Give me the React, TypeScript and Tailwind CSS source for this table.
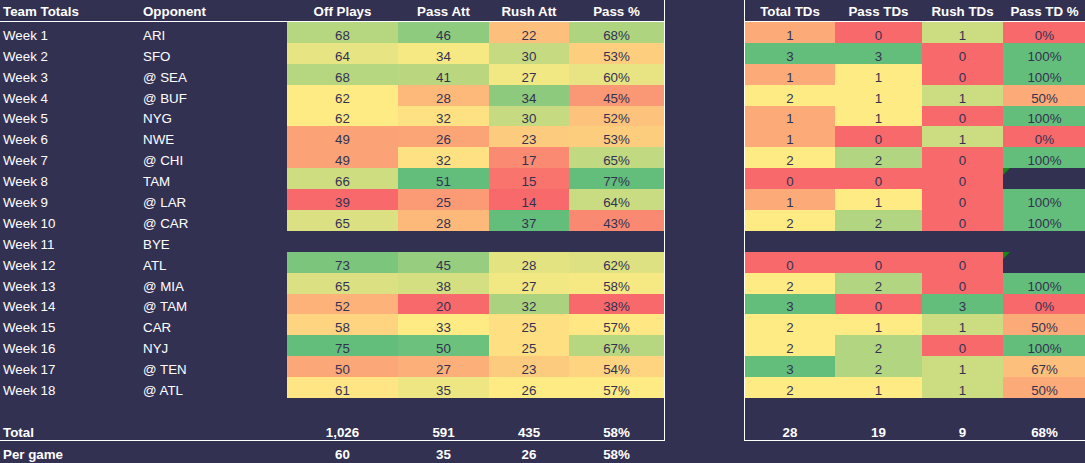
import React from "react"

type Game = {
  week: string
  opp: string
  off?: number
  pass?: number
  rush?: number
  td?: number
  ptd?: number
  rtd?: number
}

const games: Game[] = [
  { week: "Week 1", opp: "ARI", off: 68, pass: 46, rush: 22, td: 1, ptd: 0, rtd: 1 },
  { week: "Week 2", opp: "SFO", off: 64, pass: 34, rush: 30, td: 3, ptd: 3, rtd: 0 },
  { week: "Week 3", opp: "@ SEA", off: 68, pass: 41, rush: 27, td: 1, ptd: 1, rtd: 0 },
  { week: "Week 4", opp: "@ BUF", off: 62, pass: 28, rush: 34, td: 2, ptd: 1, rtd: 1 },
  { week: "Week 5", opp: "NYG", off: 62, pass: 32, rush: 30, td: 1, ptd: 1, rtd: 0 },
  { week: "Week 6", opp: "NWE", off: 49, pass: 26, rush: 23, td: 1, ptd: 0, rtd: 1 },
  { week: "Week 7", opp: "@ CHI", off: 49, pass: 32, rush: 17, td: 2, ptd: 2, rtd: 0 },
  { week: "Week 8", opp: "TAM", off: 66, pass: 51, rush: 15, td: 0, ptd: 0, rtd: 0 },
  { week: "Week 9", opp: "@ LAR", off: 39, pass: 25, rush: 14, td: 1, ptd: 1, rtd: 0 },
  { week: "Week 10", opp: "@ CAR", off: 65, pass: 28, rush: 37, td: 2, ptd: 2, rtd: 0 },
  { week: "Week 11", opp: "BYE" },
  { week: "Week 12", opp: "ATL", off: 73, pass: 45, rush: 28, td: 0, ptd: 0, rtd: 0 },
  { week: "Week 13", opp: "@ MIA", off: 65, pass: 38, rush: 27, td: 2, ptd: 2, rtd: 0 },
  { week: "Week 14", opp: "@ TAM", off: 52, pass: 20, rush: 32, td: 3, ptd: 0, rtd: 3 },
  { week: "Week 15", opp: "CAR", off: 58, pass: 33, rush: 25, td: 2, ptd: 1, rtd: 1 },
  { week: "Week 16", opp: "NYJ", off: 75, pass: 50, rush: 25, td: 2, ptd: 2, rtd: 0 },
  { week: "Week 17", opp: "@ TEN", off: 50, pass: 27, rush: 23, td: 3, ptd: 2, rtd: 1 },
  { week: "Week 18", opp: "@ ATL", off: 61, pass: 35, rush: 26, td: 2, ptd: 1, rtd: 1 },
]

// excel style red / yellow / green scale (min, 50th percentile, max)
const RED = [248, 105, 107]
const YEL = [255, 235, 132]
const GRN = [99, 190, 123]

function mix(a: number[], b: number[], t: number) {
  const c = a.map((v, i) => Math.round(v + (b[i] - v) * t))
  return `rgb(${c[0]}, ${c[1]}, ${c[2]})`
}

function colorScale(values: number[]) {
  const s = [...values].sort((a, b) => a - b)
  const min = s[0]
  const max = s[s.length - 1]
  const pos = (s.length - 1) * 0.5
  const lo = Math.floor(pos)
  const mid = s[lo] + (s[Math.ceil(pos)] - s[lo]) * (pos - lo)
  return (v: number) => {
    if (v <= min) return mix(RED, RED, 0)
    if (v >= max) return mix(GRN, GRN, 0)
    if (v <= mid) return mix(RED, YEL, (v - min) / (mid - min))
    return mix(YEL, GRN, (v - mid) / (max - mid))
  }
}

const played = games.filter((g) => g.off !== undefined)
const pct = (g: Game) => (g.pass! / g.off!) * 100
const tdPct = (g: Game) => (g.td ? (g.ptd! / g.td) * 100 : null)

const offColor = colorScale(played.map((g) => g.off!))
const passColor = colorScale(played.map((g) => g.pass!))
const rushColor = colorScale(played.map((g) => g.rush!))
const pctColor = colorScale(played.map(pct))
const tdColor = colorScale(played.map((g) => g.td!))
const ptdColor = colorScale(played.map((g) => g.ptd!))
const rtdColor = colorScale(played.map((g) => g.rtd!))
const tdPctColor = colorScale(played.map(tdPct).filter((v): v is number => v !== null))

const rowH = "h-[20.9px]"

function Num({ w, bg, children }: { w: string; bg?: string; children?: React.ReactNode }) {
  return (
    <div className={`${w} h-full flex items-end justify-center text-[#333152]`} style={bg ? { backgroundColor: bg } : undefined}>
      {children}
    </div>
  )
}

// cell holding an empty text value - excel shows its little green error flag
function Flagged() {
  return (
    <div className="relative w-[83px] h-full">
      <span className="absolute left-0 top-0 w-0 h-0 border-t-[7px] border-r-[7px] border-t-[#138a13] border-r-transparent" />
    </div>
  )
}

export default function App() {
  const sum = (k: "off" | "pass" | "rush" | "td" | "ptd" | "rtd") => played.reduce((a, g) => a + (g[k] as number), 0)
  const n = played.length
  const totOff = sum("off")
  const totPass = sum("pass")
  const totRush = sum("rush")
  const totTd = sum("td")
  const totPtd = sum("ptd")
  const totRtd = sum("rtd")

  return (
    <div className="w-[1085px] h-[463px] overflow-hidden bg-[#333152] flex items-start font-['Liberation_Sans',Arial,sans-serif] text-[13.33px] leading-[15px] text-white">
      {/* left table */}
      <div className="flex flex-col shrink-0">
        <div className="flex flex-col border-r border-b border-white">
          <div className="flex h-[22px] pb-[2px] border-b border-white font-bold items-end">
            <div className="w-[140px] pl-[3px]">Team Totals</div>
            <div className="w-[147px] pl-[3px]">Opponent</div>
            <div className="w-[111px] text-center">Off Plays</div>
            <div className="w-[91px] text-center">Pass Att</div>
            <div className="w-[80px] text-center">Rush Att</div>
            <div className="w-[95px] text-center">Pass %</div>
          </div>
          {games.map((g) => (
            <div key={g.week} className={`flex ${rowH}`}>
              <div className="w-[140px] pl-[3px] flex items-end">{g.week}</div>
              <div className="w-[147px] pl-[3px] flex items-end">{g.opp}</div>
              {g.off !== undefined ? (
                <>
                  <Num w="w-[111px]" bg={offColor(g.off)}>{g.off}</Num>
                  <Num w="w-[91px]" bg={passColor(g.pass!)}>{g.pass}</Num>
                  <Num w="w-[80px]" bg={rushColor(g.rush!)}>{g.rush}</Num>
                  <Num w="w-[95px]" bg={pctColor(pct(g))}>{Math.round(pct(g))}%</Num>
                </>
              ) : (
                <div className="w-[377px]" />
              )}
            </div>
          ))}
          <div className={rowH} />
          <div className={`flex ${rowH} font-bold items-end`}>
            <div className="w-[140px] pl-[3px]">Total</div>
            <div className="w-[147px]" />
            <div className="w-[111px] text-center">{totOff.toLocaleString("en-US")}</div>
            <div className="w-[91px] text-center">{totPass}</div>
            <div className="w-[80px] text-center">{totRush}</div>
            <div className="w-[95px] text-center">{Math.round((totPass / totOff) * 100)}%</div>
          </div>
        </div>
        <div className="flex h-[21px] font-bold items-end">
          <div className="w-[140px] pl-[3px]">Per game</div>
          <div className="w-[147px]" />
          <div className="w-[111px] text-center">{Math.round(totOff / n)}</div>
          <div className="w-[91px] text-center">{Math.round(totPass / n)}</div>
          <div className="w-[80px] text-center">{Math.round(totRush / n)}</div>
          <div className="w-[95px] text-center">{Math.round((totPass / totOff) * 100)}%</div>
        </div>
      </div>

      {/* right table */}
      <div className="ml-[79px] shrink-0 flex flex-col border-l border-b border-white">
        <div className="flex h-[22px] pb-[2px] border-b border-white font-bold items-end">
          <div className="w-[90px] text-center">Total TDs</div>
          <div className="w-[87px] text-center">Pass TDs</div>
          <div className="w-[81px] text-center">Rush TDs</div>
          <div className="w-[83px] text-center">Pass TD %</div>
        </div>
        {games.map((g) => {
          const p = g.off !== undefined ? tdPct(g) : null
          return (
            <div key={g.week} className={`flex ${rowH}`}>
              {g.off !== undefined ? (
                <>
                  <Num w="w-[90px]" bg={tdColor(g.td!)}>{g.td}</Num>
                  <Num w="w-[87px]" bg={ptdColor(g.ptd!)}>{g.ptd}</Num>
                  <Num w="w-[81px]" bg={rtdColor(g.rtd!)}>{g.rtd}</Num>
                  {p !== null ? <Num w="w-[83px]" bg={tdPctColor(p)}>{Math.round(p)}%</Num> : <Flagged />}
                </>
              ) : (
                <div className="w-[341px]" />
              )}
            </div>
          )
        })}
        <div className={rowH} />
        <div className={`flex ${rowH} font-bold items-end`}>
          <div className="w-[90px] text-center">{totTd}</div>
          <div className="w-[87px] text-center">{totPtd}</div>
          <div className="w-[81px] text-center">{totRtd}</div>
          <div className="w-[83px] text-center">{Math.round((totPtd / totTd) * 100)}%</div>
        </div>
      </div>
    </div>
  )
}
